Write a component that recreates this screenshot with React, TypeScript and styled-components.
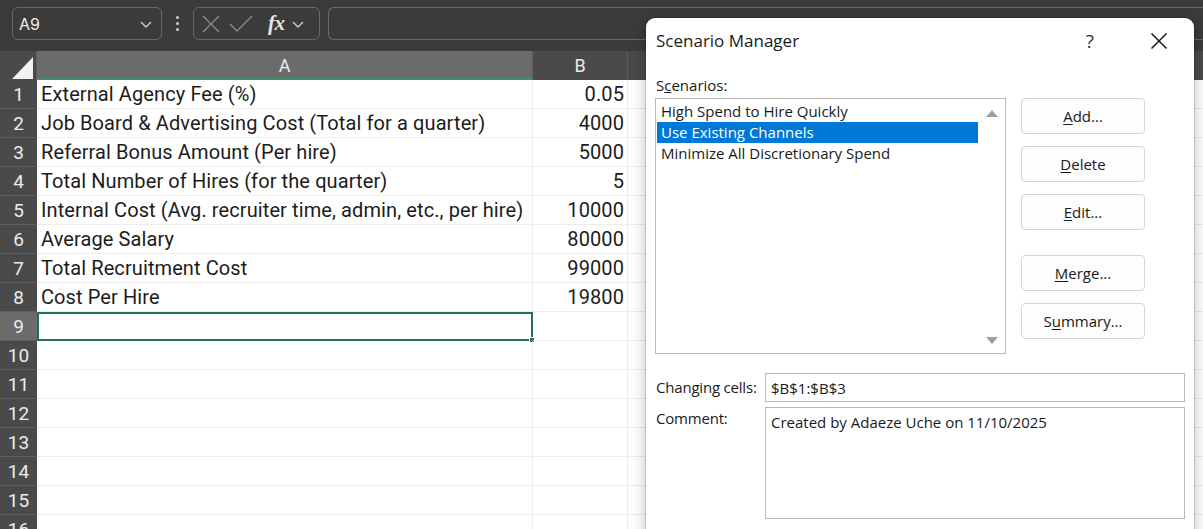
import styled, { createGlobalStyle } from "styled-components";
import { FC } from "react";

const GlobalStyle = createGlobalStyle`
  html, body {
    margin: 0;
    padding: 0;
    width: 1203px;
    height: 529px;
    overflow: hidden;
    background: #ffffff;
  }
  * { box-sizing: border-box; }
`;

const cells: [string, string][] = [
  ["External Agency Fee (%)", "0.05"],
  ["Job Board & Advertising Cost (Total for a quarter)", "4000"],
  ["Referral Bonus Amount (Per hire)", "5000"],
  ["Total Number of Hires (for the quarter)", "5"],
  ["Internal Cost (Avg. recruiter time, admin, etc., per hire)", "10000"],
  ["Average Salary", "80000"],
  ["Total Recruitment Cost", "99000"],
  ["Cost Per Hire", "19800"],
  ["", ""],
  ["", ""],
  ["", ""],
  ["", ""],
  ["", ""],
  ["", ""],
  ["", ""],
  ["", ""],
];

const Chevron: FC<{ color?: string }> = ({ color = "#cfcfcf" }) => (
  <svg width="14" height="10" viewBox="0 0 14 10">
    <path d="M2 3 L7 8 L12 3" fill="none" stroke={color} strokeWidth="1.4" />
  </svg>
);

export default function App() {
  return (
    <>
      <GlobalStyle />
      <Page>
        <Toolbar>
          <NameBox>
            <span>A9</span>
            <Chevron />
          </NameBox>
          <Dots>
            <i />
            <i />
            <i />
          </Dots>
          <FxBox>
            <svg width="22" height="22" viewBox="0 0 22 22">
              <path d="M3 3 L19 19 M19 3 L3 19" stroke="#8a8a8a" strokeWidth="1.4" fill="none" />
            </svg>
            <svg width="26" height="22" viewBox="0 0 26 22">
              <path d="M2 11 L9 18 L24 3" stroke="#8a8a8a" strokeWidth="1.4" fill="none" />
            </svg>
            <FxText>fx</FxText>
            <Chevron />
          </FxBox>
          <FormulaInput />
        </Toolbar>

        <Sheet>
          <HeaderRow>
            <Corner>
              <svg width="22" height="22" viewBox="0 0 22 22">
                <path d="M21 0 L21 22 L0 22 Z" fill="#f2f2f2" />
              </svg>
            </Corner>
            <ColHead $w={496} $selected>A</ColHead>
            <ColHead $w={95}>B</ColHead>
            <ColHead $w={600}>C</ColHead>
          </HeaderRow>
          {cells.map(([a, b], i) => (
            <Row key={i}>
              <RowHead $selected={i === 8}>{i + 1}</RowHead>
              <Cell $w={496} $active={i === 8}>
                {a}
                {i === 8 && <FillHandle />}
              </Cell>
              <Cell $w={95} $right>
                {b}
              </Cell>
              <Cell $w={100} />
              <Cell $w={100} />
              <Cell $w={100} />
              <Cell $w={100} />
              <Cell $w={100} />
              <Cell $w={100} />
            </Row>
          ))}
        </Sheet>

        <Dialog>
          <TitleBar>
            <Title>Scenario Manager</Title>
            <TitleButtons>
              <Help>?</Help>
              <svg width="18" height="18" viewBox="0 0 18 18">
                <path d="M1.5 1.5 L16.5 16.5 M16.5 1.5 L1.5 16.5" stroke="#1a1a1a" strokeWidth="1.5" />
              </svg>
            </TitleButtons>
          </TitleBar>

          <Label $mt={14}>
            S<u>c</u>enarios:
          </Label>
          <Body>
            <ListBox>
              <Items>
                <Item>High Spend to Hire Quickly</Item>
                <Item $selected>Use Existing Channels</Item>
                <Item>Minimize All Discretionary Spend</Item>
              </Items>
              <ScrollBar>
                <Arrow $down={false} />
                <Arrow $down />
              </ScrollBar>
            </ListBox>
            <Buttons>
              <Button>
                <u>A</u>dd...
              </Button>
              <Button>
                <u>D</u>elete
              </Button>
              <Button>
                <u>E</u>dit...
              </Button>
              <Button $mt={13}>
                <u>M</u>erge...
              </Button>
              <Button>
                S<u>u</u>mmary...
              </Button>
            </Buttons>
          </Body>

          <FieldRow $mt={19}>
            <FieldLabel>Changing cells:</FieldLabel>
            <Field $h={29}>$B$1:$B$3</Field>
          </FieldRow>
          <FieldRow $mt={5}>
            <FieldLabel $top>Comment:</FieldLabel>
            <Field $h={112}>Created by Adaeze Uche on 11/10/2025</Field>
          </FieldRow>
        </Dialog>
      </Page>
    </>
  );
}

const Page = styled.div`
  position: relative;
  width: 1203px;
  height: 529px;
  overflow: hidden;
  background: #ffffff;
`;

const Toolbar = styled.div`
  height: 51px;
  background: #3b3b3b;
  display: flex;
  align-items: flex-start;
  padding: 7px 0 0 12px;
`;

const NameBox = styled.div`
  width: 150px;
  height: 33px;
  border: 1px solid #6a6a6a;
  border-radius: 6px;
  display: flex;
  align-items: center;
  justify-content: space-between;
  padding: 0 8px 0 6px;
  font-family: "Inter", "Liberation Sans", sans-serif;
  font-size: 16px;
  color: #f0f0f0;
`;

const Dots = styled.div`
  width: 31px;
  height: 33px;
  display: flex;
  flex-direction: column;
  align-items: center;
  justify-content: center;
  gap: 3px;
  i {
    width: 3px;
    height: 3px;
    border-radius: 50%;
    background: #d0d0d0;
  }
`;

const FxBox = styled.div`
  width: 127px;
  height: 33px;
  border: 1px solid #6a6a6a;
  border-radius: 6px;
  display: flex;
  align-items: center;
  padding: 0 4px 0 6px;
  gap: 6px;
`;

const FxText = styled.span`
  font-family: "Liberation Serif", "DejaVu Serif", serif;
  font-style: italic;
  font-weight: bold;
  font-size: 21px;
  color: #e6e6e6;
  margin-left: 8px;
  letter-spacing: -0.5px;
`;

const FormulaInput = styled.div`
  flex: 1;
  height: 33px;
  margin-left: 8px;
  border: 1px solid #6a6a6a;
  border-right: none;
  border-radius: 6px 0 0 6px;
`;

const Sheet = styled.div`
  display: flex;
  flex-direction: column;
`;

const HeaderRow = styled.div`
  display: flex;
  height: 29px;
  background: #4a4a4a;
`;

const Corner = styled.div`
  width: 37px;
  flex: none;
  display: flex;
  align-items: flex-end;
  justify-content: flex-end;
  padding: 0 2px 1px 0;
  border-right: 1px solid #5c5c5c;
`;

const ColHead = styled.div<{ $w: number; $selected?: boolean }>`
  width: ${(p) => p.$w}px;
  flex: none;
  display: flex;
  align-items: center;
  justify-content: center;
  background: ${(p) => (p.$selected ? "#6b6b6b" : "#4a4a4a")};
  border-right: 1px solid #5e5e5e;
  border-bottom: 2px solid ${(p) => (p.$selected ? "#3f8f6a" : "#4a4a4a")};
  color: #ececec;
  font-family: "Roboto", "Liberation Sans", sans-serif;
  font-size: 18px;
  padding-top: 2px;
`;

const Row = styled.div`
  display: flex;
  height: 29px;
`;

const RowHead = styled.div<{ $selected?: boolean }>`
  width: 37px;
  flex: none;
  background: ${(p) => (p.$selected ? "#6b6b6b" : "#4a4a4a")};
  border-bottom: 1px solid #5e5e5e;
  color: #ececec;
  font-family: "Roboto", "Liberation Sans", sans-serif;
  font-size: 19px;
  display: flex;
  align-items: center;
  justify-content: center;
`;

const Cell = styled.div<{ $w: number; $right?: boolean; $active?: boolean }>`
  position: relative;
  width: ${(p) => p.$w}px;
  flex: none;
  border-right: 1px solid #ececec;
  border-bottom: 1px solid #ececec;
  display: flex;
  align-items: center;
  justify-content: ${(p) => (p.$right ? "flex-end" : "flex-start")};
  padding: 0 3px 0 4px;
  font-family: "Roboto", "Liberation Sans", sans-serif;
  font-size: 20px;
  letter-spacing: 0.1px;
  color: #1c1c1c;
  white-space: nowrap;
  ${(p) => p.$active && "outline: 2px solid #217346; outline-offset: -2px;"}
`;

const FillHandle = styled.span`
  position: absolute;
  right: -3px;
  bottom: -3px;
  width: 6px;
  height: 6px;
  background: #217346;
  border: 1px solid #ffffff;
`;

const Dialog = styled.div`
  position: absolute;
  left: 646px;
  top: 18px;
  width: 548px;
  height: 530px;
  background: #ffffff;
  border-radius: 9px 9px 0 0;
  box-shadow: 0 0 0 1px rgba(0, 0, 0, 0.12), 0 4px 16px rgba(0, 0, 0, 0.25);
  padding: 0 9px;
  display: flex;
  flex-direction: column;
  font-family: "Open Sans", "Noto Sans", sans-serif;
  font-size: 15px;
  color: #1a1a1a;
`;

const TitleBar = styled.div`
  height: 43px;
  display: flex;
  align-items: center;
  justify-content: space-between;
  padding-top: 2px;
`;

const Title = styled.div`
  font-size: 17px;
  padding-left: 1px;
`;

const TitleButtons = styled.div`
  display: flex;
  align-items: center;
  gap: 56px;
  padding-right: 17px;
`;

const Help = styled.span`
  font-size: 19px;
  color: #333;
`;

const Label = styled.div<{ $mt?: number }>`
  margin-top: ${(p) => p.$mt ?? 0}px;
  height: 20px;
  line-height: 20px;
  padding-left: 1px;
`;

const Body = styled.div`
  display: flex;
  gap: 15px;
  margin-top: 3px;
`;

const ListBox = styled.div`
  width: 351px;
  height: 256px;
  border: 1px solid #b9b9b9;
  display: flex;
  padding: 2px 0 2px 1px;
`;

const Items = styled.div`
  width: 321px;
  display: flex;
  flex-direction: column;
`;

const Item = styled.div<{ $selected?: boolean }>`
  height: 21px;
  line-height: 21px;
  padding-left: 4px;
  white-space: nowrap;
  background: ${(p) => (p.$selected ? "#0078d7" : "transparent")};
  color: ${(p) => (p.$selected ? "#ffffff" : "#1a1a1a")};
`;

const ScrollBar = styled.div`
  flex: 1;
  display: flex;
  flex-direction: column;
  align-items: center;
  justify-content: space-between;
  padding: 9px 0 7px;
`;

const Arrow = styled.span<{ $down: boolean }>`
  width: 0;
  height: 0;
  border-left: 6px solid transparent;
  border-right: 6px solid transparent;
  ${(p) =>
    p.$down
      ? "border-top: 7px solid #a0a0a0;"
      : "border-bottom: 7px solid #a0a0a0;"}
`;

const Buttons = styled.div`
  display: flex;
  flex-direction: column;
  gap: 12px;
`;

const Button = styled.div<{ $mt?: number }>`
  width: 124px;
  height: 36px;
  margin-top: ${(p) => p.$mt ?? 0}px;
  border: 1px solid #d6d6d6;
  border-radius: 4px;
  display: flex;
  align-items: center;
  justify-content: center;
  background: #fdfdfd;
  u {
    text-underline-offset: 2px;
  }
`;

const FieldRow = styled.div<{ $mt: number }>`
  display: flex;
  margin-top: ${(p) => p.$mt}px;
`;

const FieldLabel = styled.div<{ $top?: boolean }>`
  width: 110px;
  flex: none;
  padding: ${(p) => (p.$top ? "1px" : "4px")} 0 0 1px;
  line-height: 20px;
  white-space: nowrap;
  letter-spacing: -0.2px;
`;

const Field = styled.div<{ $h: number }>`
  width: 420px;
  height: ${(p) => p.$h}px;
  border: 1px solid #b9b9b9;
  padding: 4px 5px;
  white-space: nowrap;
`;
